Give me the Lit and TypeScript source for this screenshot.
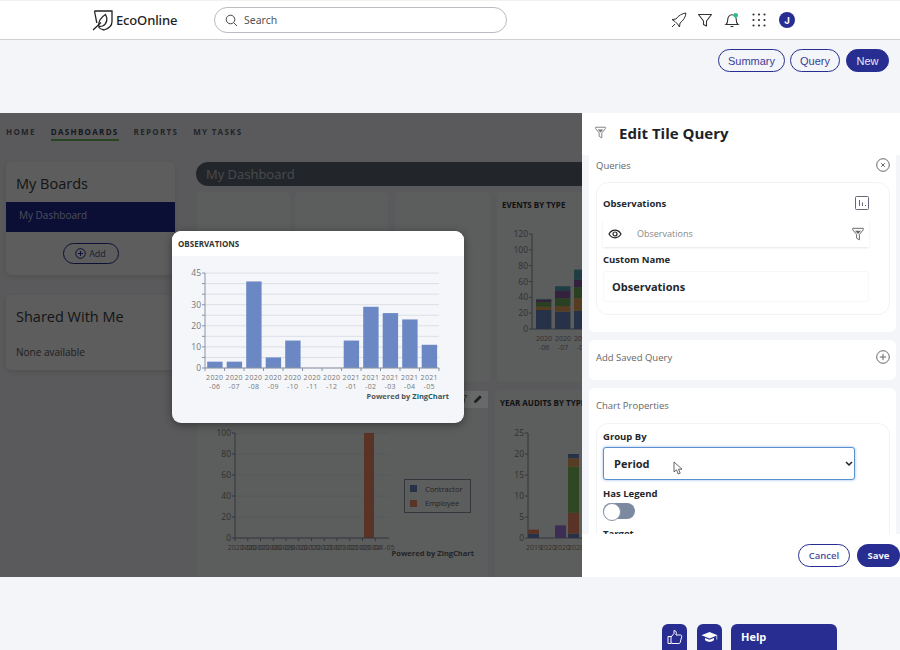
import { LitElement, html, css, svg } from "lit";
import { customElement } from "lit/decorators.js";

const PERIODS = ["06","07","08","09","10","11","12","01","02","03","04","05"].map((m, i) => [i < 7 ? "2020" : "2021", m]);
const OBS = [3,3,41,5,13,0,0,13,29,26,23,11];

const funnel = (s: number, c = "#555") => html`<svg width=${s} height=${s} viewBox="0 0 16 16" fill="none" stroke=${c} stroke-width="1.1" stroke-linejoin="round"><path d="M2 1.500h12v1.700L9.600 8.500v6.200L6.400 12.800V8.500L2 3.200z"/><path d="M4.500 4.200h7L8 8z" fill=${c} stroke="none"/></svg>`;

function obsChart() {
  const x0 = 33, y0 = 112, unit = 95 / 45, step = 19.5;
  return svg`<svg class="obs" width="292" height="167" viewBox="0 0 292 167" font-family="'Open Sans',sans-serif">
    ${Array.from({ length: 10 }, (_, i) => svg`<line x1=${x0} x2="267" y1=${y0 - i * 10.55} y2=${y0 - i * 10.55} stroke="#dcdfe5"/><line x1=${x0 - 3} x2=${x0} y1=${y0 - i * 10.55} y2=${y0 - i * 10.55} stroke="#8a93a3"/>`)}
    <line x1=${x0} x2=${x0} y1="17" y2=${y0} stroke="#8a93a3"/>
    ${OBS.map((v, i) => svg`<rect x=${x0 + 2.2 + i * step} y=${y0 - v * unit} width="15.4" height=${v * unit} fill="#6b88c4"/>`)}
    <line x1=${x0} x2="267" y1=${y0} y2=${y0} stroke="#8a93a3"/>
    ${PERIODS.map((_, i) => svg`<line x1=${x0 + i * step} x2=${x0 + i * step} y1=${y0} y2=${y0 + 3} stroke="#8a93a3"/>`)}
    <line x1="267" x2="267" y1=${y0} y2=${y0 + 3} stroke="#8a93a3"/>
    ${[45,30,20,10,0].map(v => svg`<text x=${x0 - 4} y=${y0 - v * unit + 3} text-anchor="end" font-size="8.5" fill="#777">${v}</text>`)}
    ${PERIODS.map(([y, m], i) => svg`<text x=${x0 + 9.7 + i * step} y="124" text-anchor="middle" font-size="7" letter-spacing=".3" fill="#777">${y}</text><text x=${x0 + 9.7 + i * step} y="133" text-anchor="middle" font-size="7" letter-spacing=".3" fill="#777">-${m}</text>`)}
    <text x="277" y="143" text-anchor="end" font-size="7.5" font-weight="700" fill="#555">Powered by <tspan fill="#1f5a66">ZingChart</tspan></text>
  </svg>`;
}

function eventsChart() {
  const stacks = [
    [24, 4, 6, 3, 1],
    [22, 7, 10, 9, 6],
    [23, 16, 14, 9, 13],
  ];
  const cols = ["#6b88c4", "#e8a65a", "#6fae5c", "#8a5aa8", "#5aa5b8"];
  const x0 = 35, y0 = 130, unit = 95 / 120;
  return svg`<svg class="chart" width="290" height="175" viewBox="0 0 290 175" font-family="'Open Sans',sans-serif">
    <line x1=${x0} x2=${x0} y1="35" y2=${y0} stroke="#8a93a3"/>
    <line x1=${x0} x2="260" y1=${y0} y2=${y0} stroke="#8a93a3"/>
    ${[0,20,40,60,80,100,120].map(v => svg`<line x1=${x0 - 3} x2=${x0} y1=${y0 - v * unit} y2=${y0 - v * unit} stroke="#8a93a3"/><text x=${x0 - 4} y=${y0 - v * unit + 3} text-anchor="end" font-size="8.5" fill="#888">${v}</text>`)}
    ${stacks.map((s, i) => { let acc = 0; return s.map((v, j) => { acc += v; return svg`<rect x=${x0 + 4 + i * 19} y=${y0 - acc * unit} width="15.4" height=${v * unit} fill=${cols[j]}/>`; }); })}
    ${[0,1,2].map(i => svg`<text x=${x0 + 12 + i * 19} y="142" text-anchor="middle" font-size="7" fill="#888">2020</text><text x=${x0 + 12 + i * 19} y="151" text-anchor="middle" font-size="7" fill="#888">-${PERIODS[i][1]}</text>`)}
  </svg>`;
}

function wideChart() {
  const x0 = 38, y0 = 148, unit = 1.05, step = 12.75;
  return svg`<svg class="chart" width="291" height="169" viewBox="0 0 291 169" font-family="'Open Sans',sans-serif">
    ${[0,20,40,60,80,100].map(v => svg`<line x1=${x0} x2="192" y1=${y0 - v * unit} y2=${y0 - v * unit} stroke="#eef0f4"/><line x1=${x0 - 3} x2=${x0} y1=${y0 - v * unit} y2=${y0 - v * unit} stroke="#8a93a3"/><text x=${x0 - 4} y=${y0 - v * unit + 3} text-anchor="end" font-size="8.5" fill="#888">${v}</text>`)}
    <line x1=${x0} x2=${x0} y1="43" y2=${y0} stroke="#8a93a3"/>
    <rect x="167" y="43" width="10" height="105" fill="#f08a66"/>
    <line x1=${x0} x2="192" y1=${y0} y2=${y0} stroke="#8a93a3"/>
    ${PERIODS.map(([y, m], i) => svg`<line x1=${x0 + i * step} x2=${x0 + i * step} y1=${y0} y2=${y0 + 3} stroke="#8a93a3"/><text x=${x0 + 6 + i * step} y="160" text-anchor="middle" font-size="7" fill="#888">${y}-${m}</text>`)}
    <rect x="207.5" y="89.5" width="66" height="33" fill="none" stroke="#8a93a3"/>
    <rect x="213" y="95" width="7" height="7" fill="#6b88c4"/><text x="228" y="102" font-size="7.5" fill="#666">Contractor</text>
    <rect x="213" y="110" width="7" height="7" fill="#f08a66"/><text x="228" y="116" font-size="7.5" fill="#666">Employee</text>
    <text x="277" y="169" dy="-3" text-anchor="end" font-size="7.5" font-weight="700" fill="#666">Powered by ZingChart</text>
  </svg>`;
}

function auditChart() {
  const x0 = 33, y0 = 141, unit = 105 / 25;
  const bars: [number, [number, string][]][] = [
    [35, [[1, "#6b88c4"], [1, "#f08a66"]]],
    [62, [[3, "#a07ae0"]]],
    [75, [[1, "#6b88c4"], [5, "#f08a66"], [11, "#7fc05f"], [2, "#e8a65a"], [1, "#6b88c4"]]],
  ];
  return svg`<svg class="chart" width="200" height="169" viewBox="0 0 200 169" font-family="'Open Sans',sans-serif">
    <line x1=${x0} x2=${x0} y1="36" y2=${y0} stroke="#8a93a3"/>
    <line x1=${x0} x2="200" y1=${y0} y2=${y0} stroke="#8a93a3"/>
    ${[0,5,10,15,20,25].map(v => svg`<line x1=${x0 - 3} x2=${x0} y1=${y0 - v * unit} y2=${y0 - v * unit} stroke="#8a93a3"/><text x=${x0 - 4} y=${y0 - v * unit + 3} text-anchor="end" font-size="8.5" fill="#888">${v}</text>`)}
    ${bars.map(([x, segs]) => { let acc = 0; return segs.map(([v, c]) => { acc += v; return svg`<rect x=${x - 2} y=${y0 - acc * unit} width="11" height=${v * unit} fill=${c}/>`; }); })}
    ${["2019","2020","2020","2020"].map((t, i) => svg`<text x=${x0 + 6 + i * 14} y="153" text-anchor="middle" font-size="7" fill="#888">${t}</text>`)}
  </svg>`;
}

@customElement("app-root")
export class AppRoot extends LitElement {
  static styles = css`
    :host { display: block; width: 900px; height: 650px; overflow: hidden; background: #f4f5f8; font-family: "Open Sans", sans-serif; color: #22262b; position: relative; }
    * { box-sizing: border-box; }
    .top { height: 40px; background: #fff; border-bottom: 1px solid #cfd0d4; border-top: 1px solid #f1f1f1; display: flex; align-items: center; padding-left: 92px; }
    .logo { display: flex; align-items: center; gap: 3px; width: 122px; font: 500 13px "Noto Sans", sans-serif; color: #222; letter-spacing: -.15px; }
    .search { width: 293px; height: 26px; border: 1px solid #b9bcc0; border-radius: 13px; display: flex; align-items: center; gap: 6px; padding-left: 10px; font: 400 10.5px "Noto Sans", sans-serif; color: #555; }
    .ticons { display: flex; align-items: center; margin-left: 164px; gap: 10px; }
    .ticons svg { display: block; }
    .avatar { width: 16px; height: 16px; border-radius: 50%; background: #272d91; color: #fff; font: 700 9.5px "Inter", sans-serif; display: flex; align-items: center; justify-content: center; margin-left: 3px; }
    .bar { height: 73px; display: flex; justify-content: flex-end; gap: 5px; padding: 9px 11px 0 0; align-items: flex-start; font: 400 11px "Liberation Sans", sans-serif; }
    .bar div { height: 23px; border: 1px solid #272d91; border-radius: 12px; color: #3a4099; display: flex; align-items: center; justify-content: center; background: transparent; }
    .bar .b1 { width: 67px; } .bar .b2 { width: 50px; }
    .bar .b3 { width: 43px; background: #272d91; color: #e8e9f6; margin-left: 1px; }
    .stage { height: 464px; display: flex; }
    .left { width: 582px; position: relative; overflow: hidden; flex: none; }
    .scrim { position: absolute; inset: 0; background: rgba(0,0,0,.63); }
    .hover { position: absolute; left: 464px; top: 278px; width: 24px; height: 17px; background: rgba(255,255,255,.08); }
    .nav { height: 49px; display: flex; gap: 15px; padding: 13px 0 0 6px; font: 700 8px "Open Sans", sans-serif; letter-spacing: 1.3px; color: #5d6670; }
    .nav span { height: 15px; line-height: 12px; white-space: nowrap; }
    .nav .on { border-bottom: 2px solid #6dbb5c; color: #3c4550; }
    .cols { display: flex; gap: 21px; padding-left: 6px; }
    .side { width: 169px; flex: none; }
    .card { background: #fbfbfd; border-radius: 5px; box-shadow: 0 2px 6px rgba(0,0,0,.12); }
    .boards { height: 113px; }
    .ctitle { font-size: 14.5px; padding-left: 10px; color: #3a3a3a; }
    .boards .ctitle { height: 40px; line-height: 44px; }
    .item { height: 30px; line-height: 27px; background: #20288f; color: #c9d0f0; font-size: 10px; padding-left: 13px; }
    .addwrap { display: flex; justify-content: center; padding-top: 11px; }
    .add { width: 56px; height: 21px; border: 1px solid #272d91; border-radius: 11px; display: flex; align-items: center; justify-content: center; gap: 3px; font-size: 9px; color: #4e5490; }
    .shared { height: 75px; margin-top: 20px; }
    .shared .ctitle { height: 44px; line-height: 44px; }
    .none { font-size: 10px; padding: 6px 0 0 10px; color: #555; }
    .main { width: 700px; flex: none; }
    .pill { height: 24px; border-radius: 12px 0 0 12px; background: #5d6874; color: #c4c9d2; font-size: 13px; line-height: 24px; padding-left: 10px; }
    .row { display: flex; margin-top: 6px; height: 190px; margin-left: 1px; }
    .row2 { margin-top: 8px; height: 190px; }
    .tile { flex: none; background: #fafbfd; border-radius: 5px; position: relative; }
    .t1 { width: 93px; margin-right: 5px; } .t2 { width: 93px; margin-right: 7px; } .t3 { width: 95px; margin-right: 7px; }
    .t4 { width: 290px; } .t5 { width: 291px; margin-right: 7px; } .t6 { width: 290px; }
    .tile h4 { margin: 0; font: 700 8px "Open Sans", sans-serif; padding: 7px 0 0 5px; height: 7px; white-space: nowrap; color: #333; }
    .chart { display: block; }
    .tools { position: absolute; right: 5px; top: 2px; display: flex; gap: 5px; padding: 2px 0; }
    .modal { position: absolute; left: 172px; top: 118px; width: 292px; height: 192px; background: #f4f6fa; border-radius: 9px; overflow: hidden; box-shadow: 0 2px 8px rgba(0,0,0,.4); }
    .modal h3 { margin: 0; height: 25px; background: #fff; font: 700 8px/25px "Open Sans", sans-serif; letter-spacing: 0; padding-left: 6px; color: #333; }
    .obs { display: block; }
    .panel { width: 318px; flex: none; background: #fff; display: flex; flex-direction: column; position: relative; }
    .phead { height: 42px; flex: none; display: flex; align-items: center; gap: 12px; padding: 0 0 3px 12px; font-size: 15px; font-weight: 700; color: #1d2228; }
    .pbody { flex: 1; min-height: 0; overflow: hidden; background: #f4f5f8; padding: 0 4px 0 7px; }
    .sec { background: #fff; border-radius: 6px; padding: 0 6px 0 7px; }
    .sec1 { border-radius: 0 0 6px 6px; height: 177px; }
    .sec2 { height: 40px; margin-top: 8px; padding-top: 7px; }
    .sec3 { margin-top: 8px; padding-top: 7px; height: 200px; }
    .sech { height: 20px; display: flex; justify-content: space-between; align-items: center; font-size: 9.5px; color: #666; }
    .inner { margin-top: 7px; border: 1px solid #f2f3f5; border-radius: 12px; padding: 0 20px 0 6px; }
    .in1 { height: 133px; }
    .in3 { margin-top: 8px; padding-top: 5px; height: 200px; }
    .olabel { height: 37px; padding-top: 3px; display: flex; justify-content: space-between; align-items: center; font-size: 9.5px; font-weight: 700; color: #23272d; }
    .query { height: 27px; display: flex; align-items: center; background: #fff; box-shadow: 0 1px 2px rgba(0,0,0,.1); font-size: 9px; color: #888; padding: 0 4px 0 5px; }
    .query span { flex: 1; padding-left: 15px; }
    .lab { font-size: 9.5px; font-weight: 700; height: 16px; line-height: 16px; color: #23272d; }
    .lab.cn { margin-top: 5px; }
    .name { height: 31px; border: 1px solid #f8f8fa; border-radius: 3px; font-size: 11px; font-weight: 700; line-height: 29px; padding-left: 8px; margin-top: 3px; color: #23272d; }
    .selwrap { position: relative; width: 252px; margin-top: 2px; }
    select { appearance: none; display: block; width: 252px; height: 33px; background: #fff; border: 1.5px solid #5a8fd0; border-radius: 3px; box-shadow: 0 0 3px rgba(80,140,220,.6); font: 700 11px "Open Sans", sans-serif; color: #23272d; padding-left: 10px; outline: none; }
    .chev { position: absolute; right: 2px; top: 14px; }
    .lab.hl { margin-top: 6px; }
    .toggle { width: 32px; height: 16px; margin-top: 1px; border-radius: 8px; background: #7b8aa0; position: relative; }
    .toggle::after { content: ""; position: absolute; left: 0; top: 0; width: 16px; height: 16px; border-radius: 50%; background: #fff; border: 1px solid #8a95a6; }
    .lab.tg { margin-top: 7px; }
    .cursor { position: absolute; left: 91px; top: 348px; }
    .pfoot { height: 43px; flex: none; background: #fff; display: flex; justify-content: flex-end; align-items: center; gap: 7px; }
    .btn { height: 23px; border-radius: 12px; display: flex; align-items: center; justify-content: center; font-size: 9.5px; font-weight: 600; }
    .cancel { width: 52px; border: 1px solid #272d91; color: #4d5299; background: #fff; }
    .save { width: 43px; background: #272d91; color: #f2f3fb; font-weight: 700; }
    .foot { display: flex; gap: 10px; padding: 47px 0 0 662px; }
    .fb { width: 25px; height: 26px; background: #272d91; border-radius: 6px 6px 0 0; display: flex; align-items: center; justify-content: center; }
    .help { width: 106px; height: 26px; margin-left: -1px; background: #272d91; border-radius: 6px 6px 0 0; color: #fff; font-size: 11px; font-weight: 700; padding: 5px 0 0 10px; }
  `;

  render() {
    return html`
      <div class="top">
        <div class="logo">
          <svg width="21" height="21" viewBox="0 0 21 21" fill="none" stroke="#222" stroke-width="1.3"><path d="M2.500 1H20V11.500C20 15.500 17 18.500 12 20C9.500 19.500 7.500 18.500 6.500 17"/><path d="M2.500 1L4.800 13"/><path d="M1 20L9 12.500"/><path d="M6.500 16C6.500 12 8.500 7.500 13.500 4.500C16 8.500 15 14 10.500 16C9 16.600 7.500 16.500 6.500 16Z"/></svg>
          EcoOnline
        </div>
        <div class="search">
          <svg width="13" height="13" viewBox="0 0 13 13" fill="none" stroke="#444" stroke-width="1"><circle cx="5.500" cy="5.500" r="4.300"/><path d="M8.700 8.700L12 12"/></svg>
          Search
        </div>
        <div class="ticons">
          <svg width="16" height="16" viewBox="0 0 16 16" fill="none" stroke="#333" stroke-width="1" stroke-linejoin="round"><path d="M15 1C11 1.500 7.500 3.500 5 7L1 7.500 4 9.500 6.500 12 8.500 15 9 11C12.500 8.500 14.500 5 15 1Z"/><path d="M1 15L4 12"/></svg>
          <svg width="16" height="16" viewBox="0 0 16 16" fill="none" stroke="#333" stroke-width="1.100" stroke-linejoin="round"><path d="M1.500 2.500h13L9.500 9v5L6.500 12.500V9z"/></svg>
          <svg width="16" height="16" viewBox="0 0 16 16" fill="none" stroke="#333" stroke-width="1.100" style="margin-left:1px"><path d="M2 12.500c1.300-1 1.700-2.500 1.700-4.500C3.700 5 5.500 2.800 8 2.800S12.300 5 12.300 8c0 2 .4 3.500 1.700 4.500z"/><path d="M6.500 14.500h3"/><circle cx="11.700" cy="3.200" r="2.300" fill="#27c08a" stroke="none"/></svg>
          <svg width="14" height="14" viewBox="0 0 14 14" fill="#333" style="margin-left:2px">${[1.5,7,12.5].flatMap(y => [1.5,7,12.5].map(x => svg`<circle cx=${x} cy=${y} r="1.100"/>`))}</svg>
          <div class="avatar">J</div>
        </div>
      </div>
      <div class="bar"><div class="b1">Summary</div><div class="b2">Query</div><div class="b3">New</div></div>
      <div class="stage">
        <div class="left">
          <div class="nav"><span>HOME</span><span class="on">DASHBOARDS</span><span>REPORTS</span><span>MY TASKS</span></div>
          <div class="cols">
            <div class="side">
              <div class="card boards">
                <div class="ctitle">My Boards</div>
                <div class="item">My Dashboard</div>
                <div class="addwrap"><div class="add">
                  <svg width="11" height="11" viewBox="0 0 11 11" fill="none" stroke="#272d91"><circle cx="5.500" cy="5.500" r="4.800"/><path d="M5.500 3v5M3 5.500h5"/></svg>Add
                </div></div>
              </div>
              <div class="card shared">
                <div class="ctitle">Shared With Me</div>
                <div class="none">None available</div>
              </div>
            </div>
            <div class="main">
              <div class="pill">My Dashboard</div>
              <div class="row">
                <div class="tile t1"></div><div class="tile t2"></div><div class="tile t3"></div>
                <div class="tile t4"><h4>EVENTS BY TYPE</h4>${eventsChart()}</div>
              </div>
              <div class="row row2">
                <div class="tile t5">
                  <div class="tools">
                    <svg width="9" height="10" viewBox="0 0 16 16" fill="none" stroke="#333" stroke-width="1.500"><path d="M2 2h12L9.500 8v6L6.500 12.500V8z"/></svg>
                    <svg width="10" height="10" viewBox="0 0 10 10" fill="#222"><path d="M1 9l.5-2.500L6.800 1.200l2 2L3.500 8.500z"/></svg>
                  </div>
                  ${wideChart()}
                </div>
                <div class="tile t6"><h4>YEAR AUDITS BY TYPE</h4>${auditChart()}</div>
              </div>
            </div>
          </div>
          <div class="scrim"></div>
          <div class="hover"></div>
          <div class="modal"><h3>OBSERVATIONS</h3>${obsChart()}</div>
        </div>
        <div class="panel">
          <div class="phead">${funnel(13, "#777")}<span>Edit Tile Query</span></div>
          <div class="pbody">
            <div class="sec sec1">
              <div class="sech">Queries
                <svg width="14" height="14" viewBox="0 0 14 14" fill="none" stroke="#666"><circle cx="7" cy="7" r="6.300"/><path d="M5.200 5.200l3.600 3.600M8.800 5.200l-3.600 3.600"/></svg>
              </div>
              <div class="inner in1">
                <div class="olabel">Observations
                  <svg width="14" height="14" viewBox="0 0 14 14" fill="none" stroke="#667"><rect x=".5" y=".5" width="13" height="13" rx="1"/><path d="M4.500 4v6M7.500 6.500V10M10.500 9v1"/></svg>
                </div>
                <div class="query">
                  <svg width="14" height="14" viewBox="0 0 14 14" fill="none" stroke="#222" stroke-width="1.200"><path d="M1 7c1.500-2.600 3.500-3.800 6-3.800S11.500 4.400 13 7c-1.500 2.600-3.500 3.800-6 3.800S2.500 9.600 1 7z"/><circle cx="7" cy="7" r="2"/></svg>
                  <span>Observations</span>
                  ${funnel(14, "#666")}
                </div>
                <div class="lab cn">Custom Name</div>
                <div class="name">Observations</div>
              </div>
            </div>
            <div class="sec sec2">
              <div class="sech">Add Saved Query
                <svg width="14" height="14" viewBox="0 0 14 14" fill="none" stroke="#666"><circle cx="7" cy="7" r="6.300"/><path d="M7 3.800v6.400M3.800 7h6.400"/></svg>
              </div>
            </div>
            <div class="sec sec3">
              <div class="sech">Chart Properties</div>
              <div class="inner in3">
                <div class="lab">Group By</div>
                <div class="selwrap">
                  <select><option>Period</option></select>
                  <svg class="chev" width="8" height="6" viewBox="0 0 8 6" fill="none" stroke="#222" stroke-width="1.500"><path d="M1 1l3 3 3-3"/></svg>
                </div>
                <div class="lab hl">Has Legend</div>
                <div class="toggle"></div>
                <div class="lab tg">Target</div>
              </div>
            </div>
          </div>
          <div class="pfoot"><div class="btn cancel">Cancel</div><div class="btn save">Save</div></div>
          <svg class="cursor" width="11" height="14" viewBox="0 0 11 14" fill="#fff" stroke="#555" stroke-width=".9"><path d="M1 1v10l2.500-2.200L5.200 13l2-.8-1.700-4h3.500z"/></svg>
        </div>
      </div>
      <div class="foot">
        <div class="fb"><svg width="16" height="16" viewBox="0 0 16 16" fill="none" stroke="#fff" stroke-width="1"><path d="M1 7.500h3v7H1zM4 8l3-3.500V1.500c1.500 0 2.300 1 2.300 2.300L9 6h4.500c1 0 1.500.8 1.200 1.700l-1.500 5.800c-.2.700-.7 1-1.400 1H6c-.8 0-1.500-.3-2-.8"/></svg></div>
        <div class="fb"><svg width="17" height="12" viewBox="0 0 17 12" fill="#fff"><path d="M8.500 1L16.500 4.300 8.500 7.600 .5 4.300z"/><path d="M4 7l4.500 1.800L13 7v2c-1 1.200-2.500 1.800-4.500 1.800S5 10.200 4 9z"/><path d="M15.500 4.500h.7v4h-.7z"/></svg></div>
        <div class="help">Help</div>
      </div>
    `;
  }
}
